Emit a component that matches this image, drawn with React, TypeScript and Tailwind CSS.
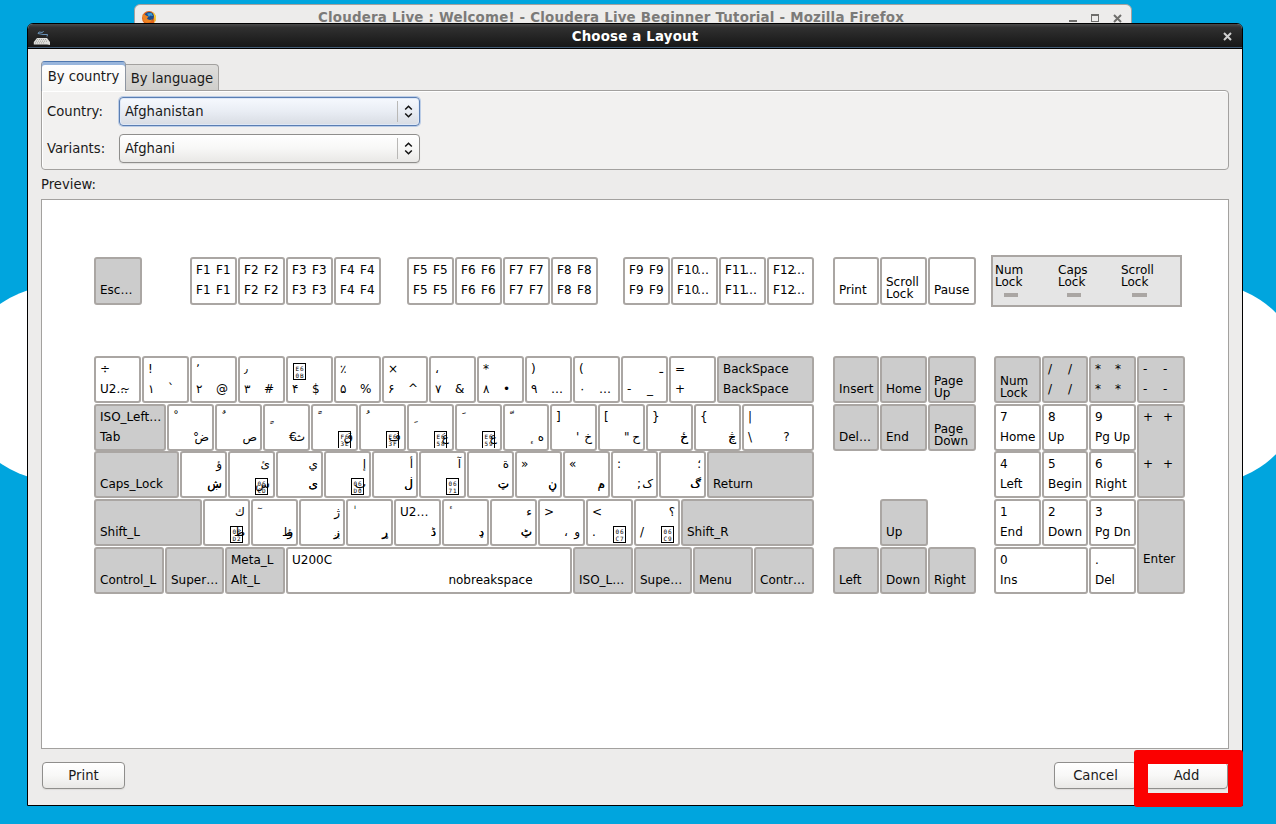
import React, { ReactNode } from "react";

type Label = string | { hex: string; cut?: boolean };
type KeyDef = {
  tl?: Label;
  tr?: Label;
  bl?: Label;
  br?: Label;
  stack?: [string, string];
  gray?: boolean;
  tall?: boolean;
};

const k = (bl?: Label, tl?: Label, br?: Label, tr?: Label): KeyDef => ({ bl, tl, br, tr });
const g = (bl?: Label, tl?: Label, br?: Label, tr?: Label): KeyDef => ({ bl, tl, br, tr, gray: true });
const same = (s: string, second = s): KeyDef => ({ bl: s, tl: s, br: second, tr: second });
const hex = (h: string, cut = false): Label => ({ hex: h, cut });

function HexBox({ value, cut }: { value: string; cut?: boolean }) {
  return (
    <span
      className={
        "mt-[4px] ml-px grid h-[17px] w-[13px] grid-cols-2 place-items-center border border-black p-px font-['DejaVu_Sans_Mono',monospace] text-[6px] leading-[7px] " +
        (cut ? "border-b-0" : "")
      }
    >
      {value.split("").map((c, i) => (
        <span key={i}>{c}</span>
      ))}
    </span>
  );
}

function Slot({ label, second }: { label?: Label; second?: boolean }) {
  if (label === undefined) return null;
  return (
    <div dir="auto" className={"col-start-1 row-start-1 min-w-0 text-start whitespace-pre " + (second ? "ml-5" : "")}>
      {typeof label === "string" ? label : <HexBox value={label.hex} cut={label.cut} />}
    </div>
  );
}

function Key({ def, width, height }: { def: KeyDef; width: number; height: string }) {
  return (
    <div
      style={{ width }}
      className={
        "shrink-0 overflow-hidden rounded-[3px] border-2 border-[#aaa6a3] pt-px pr-[3px] pl-1 text-[12px] leading-5 text-black " +
        height +
        (def.gray ? " bg-[#cccccc]" : " bg-white")
      }
    >
      {def.stack ? (
        <div className="pt-4 leading-3">
          <div>{def.stack[0]}</div>
          <div>{def.stack[1]}</div>
        </div>
      ) : (
        <>
          <div className={"grid grid-cols-[minmax(0,1fr)] " + (def.tall ? "h-[47px]" : "h-5")}>
            <Slot label={def.tl} />
            <Slot label={def.tr} second />
          </div>
          <div className="grid h-5 grid-cols-[minmax(0,1fr)]">
            <Slot label={def.bl} />
            <Slot label={def.br} second />
          </div>
        </>
      )}
    </div>
  );
}

/* `edges` lists the start of every key, followed by the end of the row. */
function Row({ edges, keys, height = "h-[47px]", className = "" }: { edges: number[]; keys: KeyDef[]; height?: string; className?: string }) {
  return (
    <div className={"flex gap-px " + className}>
      {keys.map((def, i) => (
        <Key key={i} def={def} width={edges[i + 1] - edges[i] - 1} height={height} />
      ))}
    </div>
  );
}

const N = "\u00a0";
const digits: KeyDef[] = [
  k("U2...", "÷", "~"),
  k("۱", "!", "`"),
  k("۲", "٬", "@"),
  k("۳", "٫", "#"),
  k("۴", hex("E60B"), "$"),
  k("۵", "٪", "%"),
  k("۶", "×", "^"),
  k("۷", "،", "&"),
  k("۸", "*", "•"),
  k("۹", ")", "…"),
  k("۰", "(", "…"),
  k("-", "ـ", "_"),
  k("+", "="),
  g("BackSpace", "BackSpace"),
];
const tabRow: KeyDef[] = [
  g("Tab", "ISO_Left…"),
  k("ض", N + "ْ", "°"),
  k("ص", N + "ٌ"),
  k("ث", N + "ٍ", "€"),
  k("ق", N + "ً", hex("F63E", true)),
  k("ف", N + "ُ", hex("E63F", true)),
  k("غ", N + "ِ", hex("E658", true)),
  k("ع", N + "َ", hex("E659", true)),
  k("ه", N + "ّ", N + "ٕ"),
  k("خ", "]", "'"),
  k("ح", "[", '"'),
  k("ځ", "}", "خ"),
  k("څ", "{", "چ"),
  k("\\", "|", "    ?"),
];
const capsRow: KeyDef[] = [
  g("Caps_Lock"),
  k("ش", "ؤ", "ښ"),
  k("س", "ئ", hex("06CD")),
  k("ی", "ي", "ى"),
  k("ب", "إ", hex("06D0")),
  k("ل", "أ", "ڶ"),
  k(undefined, "آ", hex("0671")),
  k("ت", "ة", "ټ"),
  k("ن", "»", "ڼ"),
  k("م", "«", "ه"),
  k("ک", ":", ";"),
  k("ګ", "؛", "گ"),
  g("Return"),
];
const shiftRow: KeyDef[] = [
  g("Shift_L"),
  k("ظ", "ك", hex("06D2")),
  k("ط", N + "ٓ", "ؤ"),
  k("ز", "ژ", "ږ"),
  k("ر", N + "ٰ", "ړ"),
  k("د", "U2…", "ڈ"),
  k("د", N + "ٔ", "ډ"),
  k("ٹ", "ء", "ټ"),
  k("و", ">", "،"),
  k(".", "<", hex("06C7")),
  k("/", "؟", hex("06C9")),
  g("Shift_R"),
];
const spaceRow: KeyDef[] = [
  g("Control_L"),
  g("Super…"),
  g("Alt_L", "Meta_L"),
  k("                                         nobreakspace", "U200C"),
  g("ISO_L…"),
  g("Supe…"),
  g("Menu"),
  g("Contr…"),
];
const stack = (a: string, b: string, gray = true): KeyDef => ({ stack: [a, b], gray });

function Keyboard() {
  return (
    <div className="pt-[55px] pl-[52px]">
      <div className="flex items-start">
        <div className="flex w-[739px] pt-[2px]">
          <Row edges={[94, 143]} keys={[g("Esc…")]} height="h-12" />
          <Row className="ml-12" edges={[190, 238, 286, 334, 382]} keys={["F1", "F2", "F3", "F4"].map((s) => same(s))} height="h-12" />
          <Row className="ml-[26px]" edges={[407, 455, 503, 551, 599]} keys={["F5", "F6", "F7", "F8"].map((s) => same(s))} height="h-12" />
          <Row
            className="ml-[25px]"
            edges={[623, 671, 719, 767, 815]}
            keys={[same("F9"), same("F10", "…"), same("F11", "…"), same("F12", "…")]}
            height="h-12"
          />
        </div>
        <Row className="w-[158px] pt-[2px]" edges={[833, 880, 928, 977]} keys={[k("Print"), stack("Scroll", "Lock", false), k("Pause")]} height="h-12" />
        <div className="flex h-[52px] w-[191px] border-2 border-[#aaa6a3] bg-[#e5e5e5] pt-[7px] pl-0.5 text-[12px] leading-3 text-black">
          {["Num", "Caps", "Scroll"].map((s) => (
            <div key={s} className="w-[63px] shrink-0">
              <div>{s}</div>
              <div>Lock</div>
              <div className={"mt-[5px] h-1 bg-[#aaa6a3] " + (s === "Scroll" ? "ml-[11px] w-[15px]" : "ml-[9px] w-[14px]")} />
            </div>
          ))}
        </div>
      </div>

      <div className="mt-[49px] flex items-start">
        <div className="w-[739px]">
          <Row className="mb-px" edges={[94, 142, 190, 238, 286, 334, 382, 429, 477, 525, 573, 621, 669, 717, 815]} keys={digits} />
          <Row edges={[94, 167, 215, 263, 311, 359, 407, 455, 503, 550, 598, 646, 694, 742, 815]} keys={tabRow} />
          <Row className="mb-px" edges={[94, 180, 228, 276, 324, 372, 419, 467, 515, 563, 611, 659, 707, 815]} keys={capsRow} />
          <Row className="mb-px" edges={[94, 203, 251, 299, 346, 394, 442, 490, 538, 586, 634, 681, 815]} keys={shiftRow} />
          <Row edges={[94, 165, 225, 286, 573, 634, 693, 754, 815]} keys={spaceRow} />
        </div>
        <div className="w-[161px]">
          <Row className="mb-px" edges={[833, 880, 928, 977]} keys={[g("Insert"), g("Home"), stack("Page", "Up")]} />
          <Row edges={[833, 880, 928, 977]} keys={[g("Del…"), g("End"), stack("Page", "Down")]} />
          <Row className="mt-12 mb-px ml-[47px]" edges={[880, 929]} keys={[g("Up")]} />
          <Row edges={[833, 880, 928, 977]} keys={[g("Left"), g("Down"), g("Right")]} />
        </div>
        <div>
          <Row
            className="mb-px"
            edges={[994, 1042, 1089, 1137, 1186]}
            keys={[
              stack("Num", "Lock"),
              { ...same("/"), gray: true },
              { ...same("*"), gray: true },
              { ...same("-"), gray: true },
            ]}
          />
          <div className="flex gap-px">
            <div>
              <Row edges={[994, 1042, 1089, 1137]} keys={[k("Home", "7"), k("Up", "8"), k("Pg Up", "9")]} />
              <Row className="mb-px" edges={[994, 1042, 1089, 1137]} keys={[k("Left", "4"), k("Begin", "5"), k("Right", "6")]} />
              <Row className="mb-px" edges={[994, 1042, 1089, 1137]} keys={[k("End", "1"), k("Down", "2"), k("Pg Dn", "3")]} />
              <Row edges={[994, 1089, 1137]} keys={[k("Ins", "0"), k("Del", ".")]} />
            </div>
            <div className="flex flex-col gap-px">
              <Key width={48} height="h-[94px]" def={{ ...same("+"), gray: true, tall: true }} />
              <Key width={48} height="h-[95px]" def={{ bl: "Enter", gray: true, tall: true }} />
            </div>
          </div>
        </div>
      </div>
    </div>
  );
}

function Combo({ value, focused }: { value: string; focused?: boolean }) {
  return (
    <div
      className={
        "flex h-[29px] w-[301px] items-center rounded-[4px] border pl-[5px] " +
        (focused
          ? "border-[#5a7eb3] bg-linear-to-b from-[#f6f9fe] via-[#e9edf4] to-[#d8dce3] shadow-[0_0_0_1px_#bccde6,inset_0_0_0_1px_#dfe8f6]"
          : "border-[#8f8e8c] bg-linear-to-b from-white via-[#f7f7f6] to-[#e9e8e6] shadow-[0_1px_1px_#dddcda]")
      }
    >
      <span className="flex-1">{value}</span>
      <span className="h-[21px] w-px bg-[#b9b8b6]" />
      <span className="flex w-[21px] justify-center pr-px">
        <svg width="9" height="13" viewBox="0 0 9 13" fill="none" stroke="#111" strokeWidth="1.5">
          <path d="M1.2 4.5 4.5 1.2 7.8 4.5M1.2 8.5 4.5 11.8 7.8 8.5" />
        </svg>
      </span>
    </div>
  );
}

function Button({ children, className = "" }: { children: ReactNode; className?: string }) {
  return (
    <button
      className={
        "h-[27px] rounded-[4px] border border-[#8f8e8c] bg-linear-to-b from-white via-[#f8f8f7] to-[#e9e8e6] shadow-[0_1px_1px_#dddcda] " + className
      }
    >
      {children}
    </button>
  );
}

function Cross({ color }: { color: string }) {
  return (
    <svg width="9" height="9" viewBox="0 0 9 9" fill="none" stroke={color} strokeWidth="2">
      <path d="M1 1 8 8M8 1 1 8" />
    </svg>
  );
}

export default function App() {
  return (
    <div className="relative h-[824px] w-[1276px] overflow-hidden bg-[#00a5de] font-['DejaVu_Sans','Noto_Sans',sans-serif] text-[13.2px] leading-4 text-[#1a1a1a]">
      <div className="absolute top-[286px] left-[-41px] h-[195px] w-[195px] rounded-full bg-white" />
      <div className="absolute top-[283px] left-[1104px] h-[201px] w-[201px] rounded-full bg-white" />

      <div className="absolute top-1 left-[134px] flex h-[30px] w-[998px] items-start rounded-t-[6px] border border-[#a3a19f] bg-[#edeceb] px-[7px] pt-[5px]">
        <svg width="14" height="14" viewBox="0 0 14 14" className="mt-px">
          <circle cx="7" cy="7" r="7" fill="#e2661b" />
          <path d="M10 .8A7 7 0 0 1 12 12C13 8 12 4 10 .8Z" fill="#f9d13a" />
          <circle cx="7.2" cy="5.6" r="4.7" fill="#1c4c8c" />
          <path d="M5 2.5 9.5 2 11 5 8 4.5 7 6Z" fill="#3c9ed8" />
          <path d="M.6 3.5C3 3 4 5 6.5 5.5L5 7.5C6.5 9.5 9 9 10.5 8 9.5 12 4 13 1.5 10Z" fill="#ee8422" />
        </svg>
        <span className="-mt-px flex-1 pr-[3px] text-center text-[13.4px] leading-[18px] font-bold tracking-[0.2px] whitespace-nowrap text-[#7b7a78]">
          Cloudera Live : Welcome! - Cloudera Live Beginner Tutorial - Mozilla Firefox
        </span>
        <span className="mt-[10px] h-0.5 w-2 bg-[#6f6e6c]" />
        <span className="mt-1 ml-[14px] h-2 w-2 border border-t-2 border-[#6f6e6c]" />
        <span className="mt-1 ml-[14px] pr-[2px]">
          <Cross color="#6f6e6c" />
        </span>
      </div>

      <div className="absolute top-[23px] left-[27px] flex h-[783px] w-[1216px] flex-col rounded-t-[6px] border border-black bg-[#edeceb]">
        <div className="flex h-[25px] shrink-0 items-center rounded-t-[5px] border-b border-black bg-linear-to-b from-[#4a4a4a] via-[#303030] via-15% to-[#161616] pr-[10px] pl-[5px] shadow-[inset_0_-1px_0_#415a73]">
          <svg width="18" height="16" viewBox="0 0 18 16" fill="none" className="mt-[3px]">
            <path d="M14 6.5 14.5 4.5 10 4.5 5 3.5 6 2 9.5 2.5 10.5 1" stroke="#6a93b8" strokeWidth="1" />
            <path d="M4 8H14L17 12V15L14 14.5H.8V12Z" fill="#dededb" />
            <path d="M4 9.5H13M3 11.2H14M2 12.9H12" stroke="#94948d" strokeWidth=".8" strokeDasharray="1 1" />
          </svg>
          <span className="flex-1 pt-0.5 pr-1 text-center text-[13.33px] font-bold tracking-[0.2px] text-white">Choose a Layout</span>
          <Cross color="#cfcfcf" />
        </div>

        <div className="flex flex-1 flex-col pr-[13px] pl-[13px]">
          <div className="z-10 mt-[12px] -mb-px flex h-[30px] items-end">
            <div className="h-[30px] w-[85px] rounded-t-[4px] border border-b-0 border-[#8d95a1] border-t-[#4f78b0] bg-linear-to-b from-white to-[#f5f5f4] pt-[3px] text-center leading-[23px] shadow-[inset_0_3px_0_#98b5dc]">
              By country
            </div>
            <div className="mb-px h-[26px] w-[93px] rounded-tr-[4px] border border-b-0 border-l-0 border-[#a3a19f] bg-linear-to-b from-[#dfdedc] to-[#cfcecb] text-center leading-[28px]">
              By language
            </div>
          </div>
          <div className="flex h-[80px] flex-col gap-2 rounded-[4px] rounded-tl-none border border-[#a3a19f] bg-[#f2f1f0] pt-[6px] pl-[5px] shadow-[inset_0_1px_0_#fff,inset_1px_0_0_#fff]">
            <div className="flex items-center">
              <span className="w-[72px]">Country:</span>
              <Combo value="Afghanistan" focused />
            </div>
            <div className="flex items-center">
              <span className="w-[72px]">Variants:</span>
              <Combo value="Afghani" />
            </div>
          </div>
          <div className="mt-[7px] h-[22px]">Preview:</div>
          <div className="h-[550px] w-[1188px] border border-[#a3a19f] bg-white">
            <Keyboard />
          </div>
          <div className="mt-[13px] flex pl-px">
            <Button className="w-[83px]">Print</Button>
            <Button className="ml-auto w-[83px]">Cancel</Button>
            <Button className="mr-px ml-2 w-[83px]">Add</Button>
          </div>
        </div>
      </div>

      <div className="absolute top-[750px] left-[1134px] h-[57px] w-[109px] rounded-[3px] border-x-[14px] border-t-[14px] border-r-[15px] border-b-[14px] border-[#fb0000]" />
    </div>
  );
}
